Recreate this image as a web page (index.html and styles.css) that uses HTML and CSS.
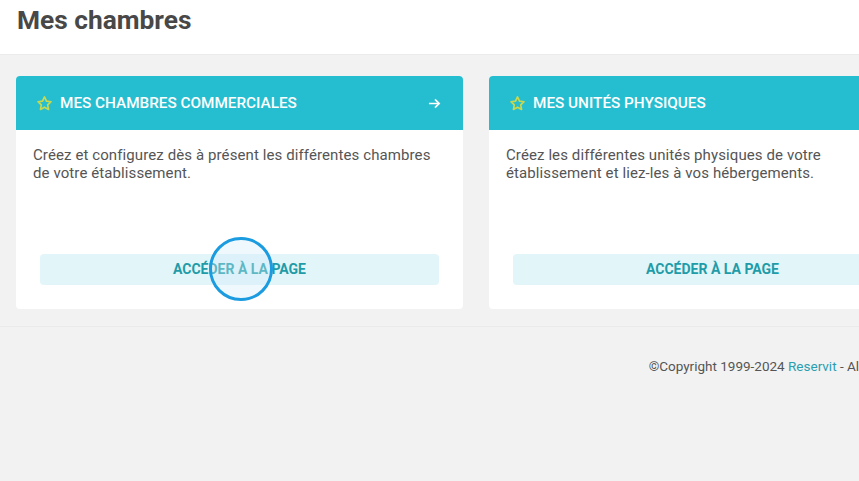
FILE: index.html
```html
<html lang="fr">
<head>
    <meta charset="UTF-8">
    <meta name="viewport" content="width=device-width, initial-scale=1.0">
    <title>Mes chambres</title>
    <link rel="stylesheet" href="styles.css">
</head>
<body>
    <div class="page">
        <div class="top_bar">
            <h1 class="title">Mes chambres</h1>
        </div>

        <div class="cards">
            <div class="card">
                <div class="card_head">
                    <svg class="star" viewBox="0 0 24 24" width="17" height="17">
                        <path d="M12 2.8l2.8 5.9 6.4.8-4.7 4.4 1.2 6.4L12 17.2l-5.7 3.1 1.2-6.4-4.7-4.4 6.4-.8z" fill="none" stroke="#c9d84e" stroke-width="2.4" stroke-linejoin="round"/>
                    </svg>
                    <span class="head_text">Mes chambres commerciales</span>
                    <svg class="arrow" viewBox="0 0 14 14" width="13" height="13">
                        <path d="M1 7h11M7.5 2.5L12 7l-4.5 4.5" fill="none" stroke="#fff" stroke-width="1.8"/>
                    </svg>
                </div>
                <div class="card_body">
                    <p class="desc">Créez et configurez dès à présent les différentes chambres de votre établissement.</p>
                    <a class="btn">Accéder à la page<span class="tap"></span></a>
                </div>
            </div>

            <div class="card">
                <div class="card_head">
                    <svg class="star" viewBox="0 0 24 24" width="17" height="17">
                        <path d="M12 2.8l2.8 5.9 6.4.8-4.7 4.4 1.2 6.4L12 17.2l-5.7 3.1 1.2-6.4-4.7-4.4 6.4-.8z" fill="none" stroke="#c9d84e" stroke-width="2.4" stroke-linejoin="round"/>
                    </svg>
                    <span class="head_text">Mes unités physiques</span>
                </div>
                <div class="card_body">
                    <p class="desc">Créez les différentes unités physiques de votre établissement et liez-les à vos hébergements.</p>
                    <a class="btn">Accéder à la page</a>
                </div>
            </div>
        </div>

        <div class="footer">
            <span>©Copyright 1999-2024 <a class="link">Reservit</a> - All rights reserved</span>
        </div>
    </div>
</body>
</html>
```

FILE: styles.css
```css
body{
    margin: 0;
    background: #f2f2f2;
    font-family: Roboto, "Liberation Sans", sans-serif;
    overflow: hidden;
}
.page{
    width: 971px;
}
.top_bar{
    background: #fff;
    height: 55px;
    border-bottom: 1px solid #ebebeb;
    box-sizing: border-box;
    padding: 5px 17px 0;
}
.title{
    margin: 0;
    font-size: 26.3px;
    line-height: 30px;
    font-weight: 700;
    color: #484848;
}
.cards{
    display: flex;
    gap: 26px;
    padding: 21px 16px 17px;
    border-bottom: 1px solid #eaeaea;
}
.card{
    width: 447px;
    height: 233px;
    flex-shrink: 0;
    background: #fff;
    border-radius: 4px;
    display: flex;
    flex-direction: column;
    overflow: hidden;
}
.card_head{
    height: 54px;
    background: #25bed0;
    display: flex;
    align-items: center;
    padding: 0 22px 0 20px;
    color: #fff;
}
.star{
    margin-right: 7px;
}
.head_text{
    flex: 1;
    font-size: 15.3px;
    font-weight: 500;
    text-transform: uppercase;
}
.card_body{
    flex: 1;
    display: flex;
    flex-direction: column;
    padding: 16px 24px 24px 17px;
}
.desc{
    margin: 0;
    font-size: 15px;
    letter-spacing: 0.1px;
    line-height: 18px;
    color: #555;
}
.btn{
    position: relative;
    margin: auto 0 0 7px;
    height: 31px;
    line-height: 31px;
    background: #e2f5f9;
    border-radius: 4px;
    text-align: center;
    text-transform: uppercase;
    font-size: 14px;
    font-weight: 700;
    color: #1f9ca8;
}
.tap{
    position: absolute;
    left: 169px;
    top: -17px;
    width: 64px;
    height: 64px;
    box-sizing: border-box;
    border: 3px solid #1b9be0;
    border-radius: 50%;
    background: rgba(210, 236, 248, 0.35);
}
.footer{
    display: flex;
    justify-content: flex-end;
    padding: 31px 16px 0;
    font-size: 13.5px;
    color: #555;
}
.link{
    color: #2a9fb2;
}
```
